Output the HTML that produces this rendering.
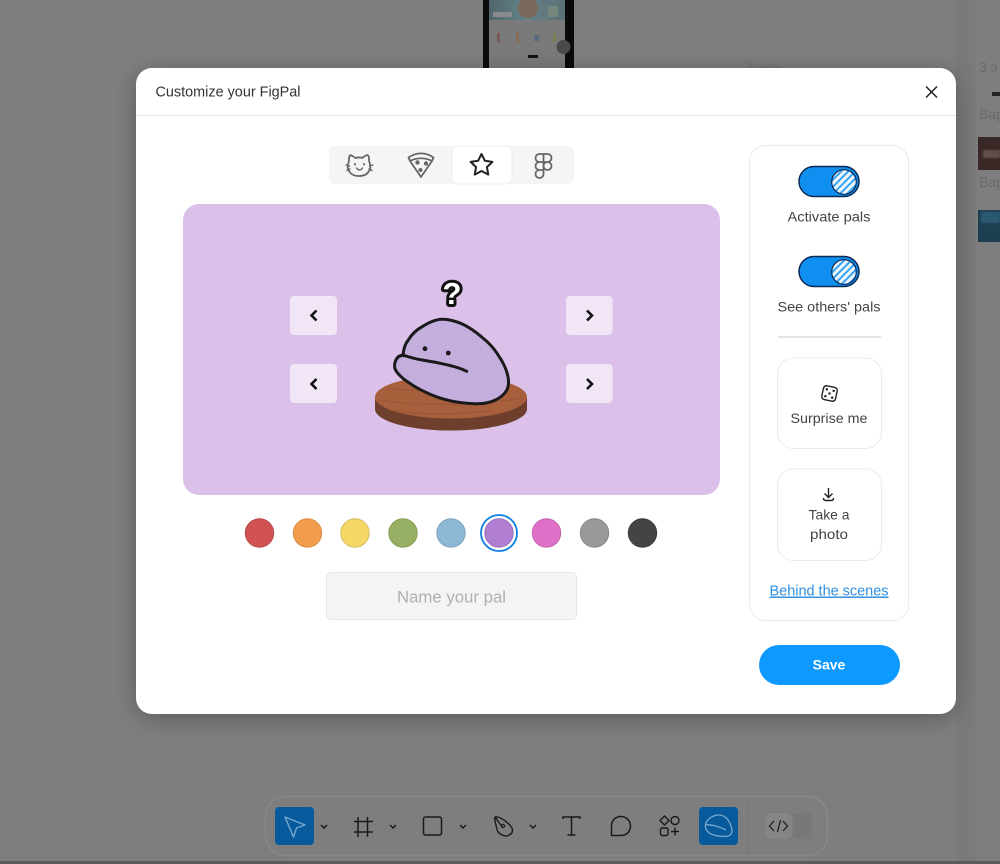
<!DOCTYPE html>
<html><head><meta charset="utf-8"><title>FigPal</title>
<style>
html,body{margin:0;padding:0;width:1000px;height:864px;overflow:hidden;background:#7e7e7e}
body{position:relative;font-family:"Liberation Sans",sans-serif}
svg{position:absolute;left:0;top:0;display:block}
text{font-family:"Liberation Sans",sans-serif}
</style></head><body>
<svg width="1000" height="864" viewBox="0 0 1000 864" xmlns="http://www.w3.org/2000/svg">
<defs>
<pattern id="h" width="5" height="5" patternUnits="userSpaceOnUse" patternTransform="rotate(45)"><rect width="5" height="5" fill="#eef8ff"/><rect width="2" height="5" fill="#3aa2f0"/></pattern>
<filter id="sh" x="-10%" y="-10%" width="120%" height="125%"><feDropShadow dx="0" dy="4" stdDeviation="12" flood-color="#000" flood-opacity=".28"/></filter>
<filter id="b1"><feGaussianBlur stdDeviation=".8"/></filter>
<linearGradient id="ph" x1="0" y1="0" x2="1" y2="0"><stop offset="0" stop-color="#4f666c"/><stop offset=".5" stop-color="#66828a"/><stop offset="1" stop-color="#5a7076"/></linearGradient>
</defs>

<!-- backdrop -->
<rect width="1000" height="864" fill="#7e7e7e"/>
<rect x="0" y="861" width="1000" height="3" fill="#5c5c5c"/>
<!-- phone behind -->
<rect x="483" y="0" width="91" height="70" fill="#0a0a0a"/>
<rect x="489" y="0" width="76" height="70" fill="#7a7a7a"/>
<rect x="489" y="0" width="76" height="20" fill="url(#ph)"/>
<circle cx="528" cy="8" r="10" fill="#7a675c" filter="url(#b1)"/>
<rect x="493" y="12" width="19" height="5" fill="#8a8a8a"/>
<rect x="548" y="6" width="10" height="11" fill="#76877f"/>
<rect x="497" y="33" width="3" height="9" fill="#7a5a57"/>
<rect x="516" y="33" width="3" height="9" fill="#876a50"/>
<rect x="534" y="35" width="5" height="6" fill="#5c6a80"/>
<rect x="553" y="33" width="3" height="9" fill="#7a8250"/>
<rect x="528" y="55" width="10" height="3" fill="#111"/>
<circle cx="563.500" cy="47" r="7" fill="#4a4a4a"/>
<text x="746" y="71" font-size="12" fill="#6f6f6f" filter="url(#b1)">3 окон</text>
<!-- right column behind -->
<rect x="956" y="0" width="19" height="861" fill="#7a7a7a"/>
<text x="979" y="72" font-size="14" fill="#6a6a6a">3 э</text>
<rect x="992" y="92" width="8" height="4" fill="#222"/>
<text x="979" y="119" font-size="14" fill="#6a6a6a">Вар</text>
<rect x="978" y="137" width="22" height="33" fill="#3a2827"/>
<rect x="983" y="150" width="17" height="8" fill="#5f4f4b" filter="url(#b1)"/>
<text x="979" y="187" font-size="14" fill="#6a6a6a">Вар</text>
<rect x="978" y="210" width="22" height="32" fill="#1e3f52"/>
<rect x="981" y="212" width="19" height="11" fill="#2a5a72" filter="url(#b1)"/>

<!-- bottom toolbar -->
<rect x="265.500" y="796.500" width="562" height="59" rx="20" fill="#7e7e7e" stroke="#888" stroke-width="1.500"/>
<rect x="275" y="807" width="39" height="38" rx="4" fill="#075a9b"/>
<path d="M285 817l20 8-8.500 3-3 9z" fill="none" stroke="#7aa9cc" stroke-width="1.400" stroke-linejoin="round"/>
<path d="M321 825l3 3 3-3M390 825l3 3 3-3M460 825l3 3 3-3M530 825l3 3 3-3" fill="none" stroke="#1a1a1a" stroke-width="1.500"/>
<path d="M358 817v20M367.500 817v20M354 821.500h19M354 832h19" fill="none" stroke="#1a1a1a" stroke-width="1.500"/>
<rect x="423.500" y="817" width="18" height="18" rx="2" fill="none" stroke="#1a1a1a" stroke-width="1.500"/>
<path d="M495 817c5-1 14 6 17 11 1 3 0 5-1 6-2 0-2 2-4 2-4 0-10-3-10-7-1-4-3-9-2-12zM495 817l8 11" fill="none" stroke="#1a1a1a" stroke-width="1.400"/>
<circle cx="503" cy="826" r="1.600" fill="none" stroke="#1a1a1a" stroke-width="1.200"/>
<path d="M563 819v-2h17v2M571.500 817v18M567.500 835h8" fill="none" stroke="#1a1a1a" stroke-width="1.500"/>
<path d="M621 816.500c5 0 9.500 4 9.500 9.500s-4 9.500-9.500 9.500h-9.500v-9.500c0-5.500 4-9.500 9.500-9.500z" fill="none" stroke="#1a1a1a" stroke-width="1.500" stroke-linejoin="round"/>
<path d="M664.500 816l4.500 4.500-4.500 4.500-4.500-4.500z" fill="none" stroke="#1a1a1a" stroke-width="1.400"/>
<circle cx="675" cy="820.500" r="4" fill="none" stroke="#1a1a1a" stroke-width="1.400"/>
<rect x="660.500" y="828" width="7.500" height="7.500" rx="1.500" fill="none" stroke="#1a1a1a" stroke-width="1.400"/>
<path d="M675 827.500v8M671 831.500h8" fill="none" stroke="#1a1a1a" stroke-width="1.400"/>
<rect x="699" y="807" width="39" height="38" rx="4" fill="#075a9b"/>
<path d="M706 823c2-5 8-8 13-8 6 0 10 5 12 11 2 5 1 9-3 10-6 1-12 0-17-2-4-2-7-6-5-11zM705 825c6-1 15 2 21 5" fill="none" stroke="#7aa9cc" stroke-width="1.300"/>
<path d="M748.500 800v54" stroke="#767676" stroke-width="1"/>
<rect x="793" y="813" width="19" height="26" rx="4" fill="#787878"/>
<rect x="764" y="812" width="29" height="28" rx="6" fill="#858585" stroke="#767676" stroke-width="1"/>
<path d="M774 821l-4.500 5 4.500 5M783 821l4.500 5-4.500 5M780.500 820l-3 12" fill="none" stroke="#1a1a1a" stroke-width="1.200"/>

<!-- modal -->
<rect x="136" y="68" width="820" height="646" rx="16" fill="#fff" filter="url(#sh)"/>
<rect x="136" y="115" width="820" height="1" fill="#e6e6e6"/>
<text x="155.500" y="96.500" font-size="14.500" fill="#333" textLength="145" lengthAdjust="spacingAndGlyphs">Customize your FigPal</text>
<path d="M926 86.500l11 11M937 86.500l-11 11" stroke="#222" stroke-width="1.500" fill="none"/>

<!-- tabs -->
<rect x="329" y="146" width="245" height="38" rx="6" fill="#f5f5f5"/>
<rect x="452" y="146" width="60" height="38" rx="6" fill="#fff" stroke="#ececec"/>
<g fill="none" stroke="#666" stroke-width="1.800" stroke-linecap="round" stroke-linejoin="round">
<path d="M351 155.500c2 .5 3.500 1.500 4.500 2.500c2.500-.8 4.500-.8 7 0c1-1.500 3-2.500 5-3c1 .5 1.500 2 1.500 4c0 1.500 0 2.500 .5 3.500c1.500 3.500 1 7-1.500 10c-2 2.500-5 3.500-9 3.500s-7-1-9-3.500c-2.500-3-3-6.500-1.500-10c.5-1 .5-2 .5-3.500c0-2 .5-3.500 1.500-4z"/>
<path d="M346 165l3.500 1M347 170.500l3-1.500M373 165l-3.500 1M372 170.500l-3-1.500M356.500 168c1 1.500 2 2 3 2s2-.5 3-2" stroke-width="1.400"/>
<path d="M355 164v.5M364 164v.5" stroke-width="1.900"/>
<path d="M408.500 157.500c8-5.500 17-5.500 25 0l-1.500 3.500c-7-3.500-15-3.500-22 0zM410 161l11 16 11-16"/>
<circle cx="417.500" cy="162.500" r="2.200" fill="#666" stroke="none"/><circle cx="426" cy="163.500" r="2.200" fill="#666" stroke="none"/><circle cx="420.500" cy="170" r="2" fill="#666" stroke="none"/>
<path d="M543.500 154h4a4 4 0 0 1 0 8h-4zM543.500 154h-4a4 4 0 0 0 0 8h4zM543.500 162h-4a4 4 0 0 0 0 8h4zM543.500 170h-4a4 4 0 1 0 4 4zM543.500 166a4 4 0 1 1 8 0 4 4 0 0 1-8 0z" stroke-width="1.800"/>
</g>
<path d="M481.500 154l3.400 6.800 7.500 1.100-5.500 5.200 1.400 7.500-6.800-3.600-6.800 3.600 1.400-7.500-5.500-5.200 7.500-1.100z" fill="#fff" stroke="#222" stroke-width="2" stroke-linejoin="round"/>

<!-- stage -->
<rect x="183" y="204" width="537" height="291" rx="16" fill="#dbc1e9"/>
<g fill="#f0e6f6">
<rect x="290" y="296" width="47" height="39" rx="4"/>
<rect x="290" y="364" width="47" height="39" rx="4"/>
<rect x="566" y="296" width="46.500" height="39" rx="4"/>
<rect x="566" y="364" width="46.500" height="39" rx="4"/>
</g>
<path d="M316.500 310.500l-5 5 5 5M316.500 379l-5 5 5 5M587 310.500l5 5-5 5M587 379l5 5-5 5" fill="none" stroke="#111" stroke-width="2.600"/>

<!-- platform -->
<path d="M375 398v11c0 12 34 21.500 76 21.500s76-9.500 76-21.500v-11z" fill="#6e3f2c"/>
<ellipse cx="451" cy="397" rx="76" ry="21.500" fill="#a8603c"/>
<path d="M385 388c30 4 70 2 100 4M378 400c40 6 90 6 146-2M390 410c30 5 60 5 100 1" stroke="#9a5738" stroke-width="1.200" fill="none"/>
<!-- blob -->
<path d="M403 355C404 348 405 344 408.300 340C412 334 416 330 421.700 327C428 323 435 319.500 441.700 319.300C449 319 455 321 461.700 323.700C469 327 476 332 481.700 337C488 342 494 348 498.300 355.300C503 362 506 368 507.700 375.300C509 381 509 386 506.700 390.300C504 395 500 398 495 400.300C489 403 482 404 475 403.700C466 403.500 457 402.500 448.300 400.300C438 398 430 394.500 421.700 390.300C415 387 409 383 403.300 378.700C399 375 396 372 395 368.700C394 365 395 361 396.700 358.700C398 356 401 355.500 403 355Z" fill="#c4aede" stroke="#1a1a1a" stroke-width="3" stroke-linejoin="round"/>
<path d="M397.500 358C399 355.500 402 355 406 356C412 358 418 359.500 425 360.500C431 361.500 437 362.500 442 363.700C451 365.500 460 368 466.700 371.300" fill="none" stroke="#1a1a1a" stroke-width="3" stroke-linecap="round"/>
<circle cx="425" cy="348.700" r="2.400" fill="#1a1a1a"/><circle cx="448.300" cy="353" r="2.400" fill="#1a1a1a"/>
<!-- question mark -->
<text x="452" y="304" font-size="31" font-weight="700" text-anchor="middle" fill="#fff" stroke="#111" stroke-width="6" stroke-linejoin="round" paint-order="stroke">?</text>

<!-- swatches -->
<g stroke-width="1">
<circle cx="259.500" cy="533" r="14.200" fill="#d05252" stroke="#b84747"/>
<circle cx="307.500" cy="533" r="14.200" fill="#f29d4d" stroke="#d98c45"/>
<circle cx="355" cy="533" r="14.200" fill="#f4d765" stroke="#d8bd5a"/>
<circle cx="403" cy="533" r="14.200" fill="#98b064" stroke="#869c58"/>
<circle cx="451" cy="533" r="14.200" fill="#8eb9d6" stroke="#7ea5bf"/>
<circle cx="499" cy="533" r="14.200" fill="#b07fd3" stroke="#9c70bb"/>
<circle cx="546.500" cy="533" r="14.200" fill="#de70c8" stroke="#c563b1"/>
<circle cx="594.500" cy="533" r="14.200" fill="#999" stroke="#888"/>
<circle cx="642.500" cy="533" r="14.200" fill="#444" stroke="#3c3c3c"/>
</g>
<circle cx="499" cy="533" r="18" fill="none" stroke="#0c7fe0" stroke-width="1.800"/>

<!-- name input -->
<rect x="326.500" y="572.500" width="250" height="47" rx="4" fill="#f4f4f4" stroke="#e8e8e8"/>
<text x="451.500" y="602.500" font-size="16.500" fill="#b0b0b0" text-anchor="middle" textLength="109" lengthAdjust="spacingAndGlyphs">Name your pal</text>

<!-- side panel -->
<rect x="749.500" y="145.500" width="159" height="475" rx="16" fill="#fff" stroke="#ebebeb"/>
<rect x="799" y="166.500" width="60" height="30" rx="15" fill="#0f8ff0" stroke="#0a2a55" stroke-width="1.500"/>
<circle cx="844" cy="182" r="12.300" fill="url(#h)" stroke="#0a2a55" stroke-width="1.200"/>
<text x="829" y="221.500" font-size="14" fill="#444" text-anchor="middle" textLength="83" lengthAdjust="spacingAndGlyphs">Activate pals</text>
<rect x="799" y="256.500" width="60" height="30" rx="15" fill="#0f8ff0" stroke="#0a2a55" stroke-width="1.500"/>
<circle cx="844" cy="272" r="12.300" fill="url(#h)" stroke="#0a2a55" stroke-width="1.200"/>
<text x="829" y="311.500" font-size="14" fill="#444" text-anchor="middle" textLength="103" lengthAdjust="spacingAndGlyphs">See others' pals</text>
<rect x="778" y="336" width="103" height="2" fill="#e4e4e4"/>

<rect x="777.500" y="358" width="104" height="90.500" rx="16" fill="#fff" stroke="#ebebeb"/>
<g transform="rotate(12 829.500 393.500)"><rect x="822.500" y="386.500" width="14" height="14" rx="3" fill="none" stroke="#222" stroke-width="1.400"/>
<g fill="#222"><circle cx="826" cy="390" r="1.200"/><circle cx="833" cy="390" r="1.200"/><circle cx="829.500" cy="393.500" r="1.200"/><circle cx="826" cy="397" r="1.200"/><circle cx="833" cy="397" r="1.200"/></g></g>
<text x="829" y="423" font-size="14" fill="#444" text-anchor="middle" textLength="77" lengthAdjust="spacingAndGlyphs">Surprise me</text>

<rect x="777.500" y="469" width="104" height="91.500" rx="16" fill="#fff" stroke="#ebebeb"/>
<path d="M828.500 488v9.500M824.500 493.500l4 4 4-4M823.500 498c0 2 1 2.500 2 2.500h6c1 0 2-.5 2-2.500" fill="none" stroke="#222" stroke-width="1.400"/>
<text x="829" y="519.500" font-size="14" fill="#444" text-anchor="middle" textLength="41" lengthAdjust="spacingAndGlyphs">Take a</text>
<text x="829" y="539" font-size="14" fill="#444" text-anchor="middle" textLength="38" lengthAdjust="spacingAndGlyphs">photo</text>

<text x="829" y="595.500" font-size="14.500" fill="#2f8fe0" text-anchor="middle" text-decoration="underline" textLength="119" lengthAdjust="spacingAndGlyphs">Behind the scenes</text>

<!-- save -->
<rect x="759" y="645" width="141" height="40" rx="20" fill="#0d99ff"/>
<text x="829" y="669.500" font-size="14" font-weight="700" fill="#fff" text-anchor="middle">Save</text>
</svg>
</body></html>
